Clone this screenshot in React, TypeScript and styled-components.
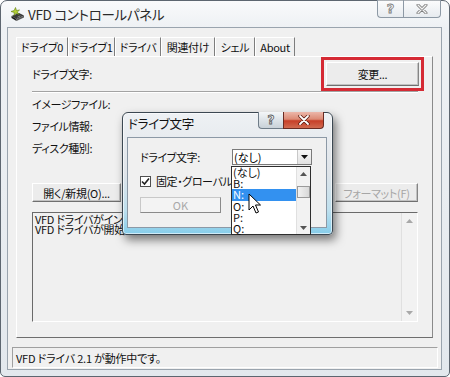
import React from "react";
import styled, { createGlobalStyle } from "styled-components";

const GlobalStyle = createGlobalStyle`
  html, body { margin: 0; padding: 0; background: #ffffff; }
  body {
    font-family: "Noto Sans CJK JP", "Noto Sans", sans-serif;
    font-feature-settings: "palt" 1;
    color: #000;
  }
  * { box-sizing: border-box; }
`;

const Screen = styled.div`
  position: relative;
  width: 450px;
  height: 377px;
  overflow: hidden;
  background: #ffffff;
`;

const Window = styled.div`
  display: flex;
  flex-direction: column;
  width: 450px;
  height: 377px;
  border: 1px solid #5d6670;
  border-radius: 7px 7px 5px 5px;
  background: linear-gradient(to bottom, #f9fafb 0%, #eef1f4 26px, #e3e8ed 100%);
  padding: 0 7px 6px 6px;
`;

const TitleBar = styled.div`
  display: flex;
  align-items: flex-start;
  height: 26px;
  flex: none;
`;

const TitleIcon = styled.svg`
  width: 15px;
  height: 15px;
  margin: 6px 3px 0 3px;
  flex: none;
`;

const TitleText = styled.div`
  font-size: 13.5px;
  letter-spacing: -0.3px;
  line-height: 26px;
  color: #2a2a2a;
  flex: 1;
`;

const CaptionGroup = styled.div`
  display: flex;
  margin-top: -1px;
  margin-right: 1px;
  height: 18px;
`;

const CapBtn = styled.div<{ $w: number; $pos: "left" | "right" }>`
  width: ${(p) => p.$w}px;
  height: 18px;
  display: flex;
  align-items: center;
  justify-content: center;
  border: 1px solid #8d99a5;
  border-top: none;
  ${(p) => (p.$pos === "left" ? "border-right: none; border-radius: 0 0 0 4px;" : "border-radius: 0 0 4px 0;")}
  background: linear-gradient(to bottom, rgba(255,255,255,0.5), rgba(220,226,232,0.5));
  font-family: "DejaVu Sans", sans-serif;
  font-size: 13px;
  font-weight: bold;
  color: #f4f4f4;
  -webkit-text-stroke: 0.8px #7c7c7c;
`;

const Client = styled.div`
  flex: 1;
  display: flex;
  flex-direction: column;
  background: #f0f0f0;
  border: 1px solid #9aa4ae;
`;

const TabStrip = styled.div`
  display: flex;
  margin: 9px 0 0 8px;
  height: 19px;
  flex: none;
`;

const Tab = styled.div<{ $w: number }>`
  width: ${(p) => p.$w}px;
  height: 19px;
  display: flex;
  align-items: center;
  justify-content: center;
  white-space: nowrap;
  font-size: 11px;
  letter-spacing: -0.3px;
  color: #111;
  border-top: 1px solid #ffffff;
  border-left: 1px solid #ffffff;
  border-right: 1px solid #7d7d7d;
`;

const Panel = styled.div`
  margin: 0 8px;
  height: 282px;
  flex: none;
  border: 1px solid;
  border-color: #ffffff #8a8a8a #6e6e6e #ffffff;
  display: flex;
  flex-direction: column;
`;

const TopRow = styled.div`
  display: flex;
  align-items: center;
  justify-content: space-between;
  height: 34px;
  padding: 0 8px 0 15px;
`;

const Label = styled.div`
  font-size: 11px;
  letter-spacing: -0.4px;
  color: #111;
`;

const RedBox = styled.div`
  width: 103px;
  height: 34px;
  border: 3px solid #d52a34;
  padding: 2px;
`;

const PushButton = styled.div<{ $w: number; $h: number; $disabled?: boolean }>`
  width: ${(p) => p.$w}px;
  height: ${(p) => p.$h}px;
  display: flex;
  align-items: center;
  justify-content: center;
  white-space: nowrap;
  font-size: 11px;
  letter-spacing: -0.3px;
  color: ${(p) => (p.$disabled ? "#a6a6a6" : "#111")};
  background: #ececec;
  border: 1px solid;
  border-color: #ffffff #858585 #6f6f6f #ffffff;
  box-shadow: inset -1px -1px 0 #c2c2c2;
`;

const Separator = styled.div`
  margin: 0 14px 0 15px;
  height: 2px;
  border-top: 1px solid #a3a3a3;
  border-bottom: 1px solid #ffffff;
`;

const InfoList = styled.div`
  padding-left: 15px;
`;

const InfoRow = styled.div`
  height: 22px;
  line-height: 22px;
  font-size: 11px;
  letter-spacing: -0.4px;
  color: #111;
`;

const ButtonRow = styled.div`
  display: flex;
  justify-content: space-between;
  margin: 24px 14px 0 15px;
  height: 19px;
`;

const LogBox = styled.div`
  display: flex;
  margin: 10px 14px 0 15px;
  height: 110px;
  border: 1px solid;
  border-color: #6a6a6a #ffffff #ffffff #6a6a6a;
  background: #f0f0f0;
`;

const LogText = styled.div`
  flex: 1;
  padding: 1px 0 0 2px;
  font-size: 11px;
  letter-spacing: -0.3px;
  line-height: 10px;
  color: #111;
  white-space: nowrap;
  overflow: hidden;
`;

const VScroll = styled.div<{ $w: number }>`
  width: ${(p) => p.$w}px;
  flex: none;
  display: flex;
  flex-direction: column;
  border-left: 1px solid #e0e0e0;
  background: #f2f2f2;
`;

const ArrowCell = styled.div<{ $h: number }>`
  height: ${(p) => p.$h}px;
  display: flex;
  align-items: center;
  justify-content: center;
  flex: none;
`;

const Fill = styled.div`
  flex: 1;
`;

const Thumb = styled.div<{ $h: number; $top: number }>`
  height: ${(p) => p.$h}px;
  margin-top: ${(p) => p.$top}px;
  border: 1px solid #9a9a9a;
  background: linear-gradient(to right, #f2f2f2, #d8d8d8);
  flex: none;
`;

const StatusBar = styled.div`
  margin: 9px 3px 1px 4px;
  height: 21px;
  flex: none;
  border: 1px solid;
  border-color: #a0a0a0 #ffffff #ffffff #a0a0a0;
  padding-left: 3px;
  display: flex;
  align-items: center;
  font-size: 11px;
  letter-spacing: -0.2px;
  color: #111;
`;

/* ---- dialog ---- */

const Dialog = styled.div`
  position: absolute;
  left: 122px;
  top: 112px;
  width: 211px;
  height: 123px;
  display: flex;
  flex-direction: column;
  border: 1px solid #3c4852;
  border-radius: 6px 6px 4px 4px;
  background: linear-gradient(to bottom, #eef1f4 0%, #dfe4e9 50%, #bfe0ee 80%, #86cdea 100%);
  box-shadow: 3px 5px 10px rgba(0, 0, 0, 0.5), inset 0 0 0 1px rgba(255,255,255,0.6);
  padding: 0 5px 6px 4px;
`;

const DialogTitleBar = styled.div`
  display: flex;
  align-items: flex-start;
  height: 24px;
  flex: none;
`;

const DialogTitle = styled.div`
  flex: 1;
  font-size: 12.5px;
  letter-spacing: -0.3px;
  line-height: 22px;
  padding-left: 1px;
  color: #111;
`;

const DlgCaption = styled.div`
  display: flex;
  margin-top: -1px;
  margin-right: 3px;
`;

const HelpBtn = styled.div`
  width: 25px;
  height: 17px;
  display: flex;
  align-items: center;
  justify-content: center;
  border: 1px solid #6f7c88;
  border-top: none;
  border-right: none;
  border-radius: 0 0 0 4px;
  background: linear-gradient(to bottom, #f4f6f8 0%, #dde3e8 50%, #c9d1d8 100%);
  font-family: "DejaVu Sans", sans-serif;
  font-size: 12px;
  font-weight: bold;
  color: #f6f6f6;
  -webkit-text-stroke: 0.8px #5a5a5a;
`;

const CloseBtn = styled.div`
  width: 41px;
  height: 17px;
  display: flex;
  align-items: center;
  justify-content: center;
  border: 1px solid #6a2b22;
  border-top: none;
  border-radius: 0 0 4px 0;
  background: linear-gradient(to bottom, #ecb7aa 0%, #dc8a75 45%, #c73f28 55%, #d06a50 100%);
`;

const DialogClient = styled.div`
  flex: 1;
  background: #f0f0f0;
  border: 1px solid #8c99a6;
  padding: 11px 0 0 12px;
  display: flex;
  flex-direction: column;
`;

const FieldRow = styled.div`
  display: flex;
  align-items: center;
  height: 16px;
`;

const FieldLabel = styled.div`
  width: 92px;
  font-size: 11px;
  letter-spacing: -0.4px;
  color: #111;
`;

const Combo = styled.div`
  width: 80px;
  height: 16px;
  display: flex;
  border: 1px solid #7a7a7a;
  background: #ffffff;
`;

const ComboText = styled.div`
  flex: 1;
  font-size: 11px;
  line-height: 14px;
  padding-left: 1px;
`;

const ComboArrow = styled.div`
  width: 14px;
  display: flex;
  align-items: center;
  justify-content: center;
  border-left: 1px solid #c8c8c8;
  background: linear-gradient(to bottom, #f7f7f7, #e2e2e2);
`;

const CheckRow = styled.div`
  display: flex;
  align-items: center;
  gap: 5px;
  margin-top: 10px;
  height: 12px;
  font-size: 11px;
  letter-spacing: -0.4px;
  color: #111;
  white-space: nowrap;
`;

const CheckBox = styled.div`
  width: 11px;
  height: 11px;
  border: 1px solid #4f4f4f;
  background: #ffffff;
  display: flex;
  align-items: center;
  justify-content: center;
`;

const OkButton = styled.div`
  margin-top: 10px;
  width: 81px;
  height: 16px;
  display: flex;
  align-items: center;
  justify-content: center;
  font-size: 11px;
  color: #a8a8a8;
  background: #f3f3f3;
  border: 1px solid;
  border-color: #c8c8c8 #8a8a8a #8a8a8a #c8c8c8;
`;

const DropList = styled.div`
  position: absolute;
  left: 108px;
  top: 53px;
  width: 80px;
  height: 69px;
  display: flex;
  border: 1px solid #2e2e2e;
  background: #ffffff;
`;

const Items = styled.div`
  flex: 1;
  display: flex;
  flex-direction: column;
`;

const Item = styled.div<{ $sel?: boolean }>`
  height: 11.2px;
  font-size: 11px;
  line-height: 11px;
  padding-left: 1px;
  color: ${(p) => (p.$sel ? "#ffffff" : "#111")};
  background: ${(p) => (p.$sel ? "#3391f0" : "transparent")};
`;

const Cursor = styled.svg`
  position: absolute;
  left: 248px;
  top: 193px;
  width: 14px;
  height: 22px;
`;

const UpTri = ({ c = "#7a7a7a" }: { c?: string }) => (
  <svg width="7" height="4" viewBox="0 0 7 4">
    <path d="M0 4 L3.5 0 L7 4 Z" fill={c} />
  </svg>
);
const DownTri = ({ c = "#7a7a7a" }: { c?: string }) => (
  <svg width="7" height="4" viewBox="0 0 7 4">
    <path d="M0 0 L3.5 4 L7 0 Z" fill={c} />
  </svg>
);

export default function App() {
  return (
    <>
      <GlobalStyle />
      <Screen>
        <Window>
          <TitleBar>
            <TitleIcon viewBox="0 0 15 15">
              <path d="M1.5 9 L9 6 L14 8.5 L6.5 12 Z" fill="#3a3a3a" />
              <path d="M1.5 9 L6.5 12 L6.5 14 L1.5 11 Z" fill="#1e1e1e" />
              <path d="M6.5 12 L14 8.5 L14 10.5 L6.5 14 Z" fill="#5a5a5a" />
              <path d="M7.5 10.2 L10.5 8.8" stroke="#9a9a9a" strokeWidth="0.8" />
              <path d="M5.5 0.5 L6.5 3.5 L9.5 3 L7.3 5 L9 7.5 L6 6.2 L4 8.5 L4.3 5.5 L1 4.5 L4.2 3.5 Z" fill="#b4d032" stroke="#5f7e0e" strokeWidth="0.6" />
            </TitleIcon>
            <TitleText>VFD コントロールパネル</TitleText>
            <CaptionGroup>
              <CapBtn $w={26} $pos="left">?</CapBtn>
              <CapBtn $w={38} $pos="right">
                <svg width="12" height="10" viewBox="0 0 12 10">
                  <path d="M2 1 L10 9 M10 1 L2 9" stroke="#7c7c7c" strokeWidth="3" strokeLinecap="round" />
                  <path d="M2 1 L10 9 M10 1 L2 9" stroke="#f4f4f4" strokeWidth="1.3" strokeLinecap="round" />
                </svg>
              </CapBtn>
            </CaptionGroup>
          </TitleBar>
          <Client>
            <TabStrip>
              <Tab $w={52}>ドライブ0</Tab>
              <Tab $w={47}>ドライブ1</Tab>
              <Tab $w={46}>ドライバ</Tab>
              <Tab $w={54}>関連付け</Tab>
              <Tab $w={40}>シェル</Tab>
              <Tab $w={40}>About</Tab>
            </TabStrip>
            <Panel>
              <TopRow>
                <Label>ドライブ文字:</Label>
                <RedBox>
                  <PushButton $w={93} $h={24}>変更...</PushButton>
                </RedBox>
              </TopRow>
              <Separator />
              <InfoList>
                <InfoRow>イメージファイル:</InfoRow>
                <InfoRow>ファイル情報:</InfoRow>
                <InfoRow>ディスク種別:</InfoRow>
              </InfoList>
              <ButtonRow>
                <PushButton $w={89} $h={19}>開く/新規(O)...</PushButton>
                <PushButton $w={80} $h={19}>保存(S)...</PushButton>
                <PushButton $w={80} $h={19}>閉じる(C)</PushButton>
                <PushButton $w={83} $h={19} $disabled>フォーマット(F)</PushButton>
              </ButtonRow>
              <LogBox>
                <LogText>
                  VFD ドライバがインストールされました。
                  <br />
                  VFD ドライバが開始されました。
                </LogText>
                <VScroll $w={16}>
                  <ArrowCell $h={16}><UpTri c="#a8a8a8" /></ArrowCell>
                  <Fill />
                  <ArrowCell $h={16}><DownTri c="#a8a8a8" /></ArrowCell>
                </VScroll>
              </LogBox>
            </Panel>
            <StatusBar>VFD ドライバ 2.1 が動作中です。</StatusBar>
          </Client>
        </Window>

        <Dialog>
          <DialogTitleBar>
            <DialogTitle>ドライブ文字</DialogTitle>
            <DlgCaption>
              <HelpBtn>?</HelpBtn>
              <CloseBtn>
                <svg width="12" height="10" viewBox="0 0 12 10">
                  <path d="M2 1 L10 9 M10 1 L2 9" stroke="#5a1a10" strokeWidth="3.4" strokeLinecap="round" />
                  <path d="M2 1 L10 9 M10 1 L2 9" stroke="#ffffff" strokeWidth="1.8" strokeLinecap="round" />
                </svg>
              </CloseBtn>
            </DlgCaption>
          </DialogTitleBar>
          <DialogClient>
            <FieldRow>
              <FieldLabel>ドライブ文字:</FieldLabel>
              <Combo>
                <ComboText>(なし)</ComboText>
                <ComboArrow><DownTri c="#111" /></ComboArrow>
              </Combo>
            </FieldRow>
            <CheckRow>
              <CheckBox>
                <svg width="9" height="9" viewBox="0 0 9 9">
                  <path d="M1 4.5 L3.5 7 L8 1.5" stroke="#222" strokeWidth="1.6" fill="none" />
                </svg>
              </CheckBox>
              固定・グローバル
            </CheckRow>
            <OkButton>OK</OkButton>
          </DialogClient>
          <DropList>
            <Items>
              <Item>(なし)</Item>
              <Item>B:</Item>
              <Item $sel>N:</Item>
              <Item>O:</Item>
              <Item>P:</Item>
              <Item>Q:</Item>
            </Items>
            <VScroll $w={14}>
              <ArrowCell $h={14}><UpTri c="#555" /></ArrowCell>
              <Thumb $h={12} $top={5} />
              <Fill />
              <ArrowCell $h={12}><DownTri c="#555" /></ArrowCell>
            </VScroll>
          </DropList>
        </Dialog>

        <Cursor viewBox="0 0 14 22">
          <path d="M1 1 L1 17 L5 13 L8 20 L10.5 19 L7.5 12 L12.5 12 Z" fill="#ffffff" stroke="#000000" strokeWidth="1" strokeLinejoin="round" />
        </Cursor>
      </Screen>
    </>
  );
}
